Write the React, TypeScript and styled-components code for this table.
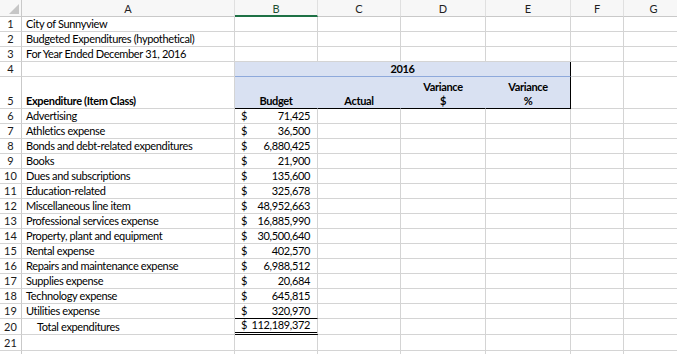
import React from "react";
import styled, { createGlobalStyle, css } from "styled-components";

const GlobalStyle = createGlobalStyle`
  html, body {
    margin: 0;
    padding: 0;
    background: #ffffff;
    overflow: hidden;
  }
  * {
    box-sizing: border-box;
  }
`;

const GRID = "#d4d4d4";
const FILL = "#d9e1f2";
const FONT = `"Lato", "Open Sans", "Liberation Sans", sans-serif`;

const Sheet = styled.div`
  display: grid;
  grid-template-columns: 22px 213px 83px 83px 85px 85px 53px 60px;
  grid-template-rows: 17px repeat(4, 15px) 32px repeat(14, 15px) 16px 16px 16px;
  font-family: ${FONT};
  font-size: 11px;
  letter-spacing: -0.35px;
  color: #000;
  width: 677px;
`;

const Corner = styled.div`
  position: relative;
  background: #f7f7f7;
  border-right: 1px solid #c9c9c9;
  border-bottom: 1px solid #c9c9c9;

  &::after {
    content: "";
    position: absolute;
    right: 2px;
    bottom: 2px;
    width: 0;
    height: 0;
    border-left: 10px solid transparent;
    border-bottom: 10px solid #c6c6c6;
  }
`;

const ColHead = styled.div<{ $selected?: boolean }>`
  display: flex;
  align-items: center;
  justify-content: center;
  background: #f7f7f7;
  border-right: 1px solid #e0e0e0;
  border-bottom: 1px solid #c9c9c9;
  font-size: 11px;
  letter-spacing: 0;
  color: #1f1f1f;
  padding-top: 1px;
  ${(p) =>
    p.$selected &&
    css`
      border-bottom: 2px solid #1e7145;
      color: #1e4f32;
    `}
`;

const RowHead = styled.div`
  display: flex;
  align-items: flex-end;
  justify-content: center;
  padding-bottom: 1px;
  background: #fff;
  border-right: 1px solid #c9c9c9;
  border-bottom: 1px solid ${GRID};
  font-size: 11px;
  letter-spacing: 0;
  color: #1a1a1a;
`;

type Edge = "grid" | "black" | "double" | "blue" | "none";

const edge = (e: Edge) => {
  switch (e) {
    case "black":
      return "1px solid #000";
    case "double":
      return "3px double #000";
    case "blue":
      return "1px solid #8ea9db";
    case "none":
      return `1px solid ${FILL}`;
    default:
      return `1px solid ${GRID}`;
  }
};

const Cell = styled.div<{
  $fill?: boolean;
  $bold?: boolean;
  $align?: "left" | "center" | "right";
  $bottom?: Edge;
  $right?: Edge;
  $span?: number;
  $indent?: number;
}>`
  display: flex;
  flex-direction: column;
  justify-content: flex-end;
  align-items: ${(p) =>
    p.$align === "center" ? "center" : p.$align === "right" ? "flex-end" : "flex-start"};
  padding: 0 4px 0 ${(p) => 4 + (p.$indent ?? 0)}px;
  white-space: nowrap;
  line-height: 14px;
  background: ${(p) => (p.$fill ? FILL : "#fff")};
  font-weight: ${(p) => (p.$bold ? 700 : 400)};
  border-right: ${(p) => edge(p.$right ?? "grid")};
  border-bottom: ${(p) => edge(p.$bottom ?? "grid")};
  grid-column: ${(p) => (p.$span ? `span ${p.$span}` : "auto")};
`;

const Money = styled.div`
  display: flex;
  justify-content: space-between;
  width: 100%;
  padding: 0 3px 0 2px;
`;

const cols = ["A", "B", "C", "D", "E", "F", "G"];

const items: [string, string][] = [
  ["Advertising", "71,425"],
  ["Athletics expense", "36,500"],
  ["Bonds and debt-related expenditures", "6,880,425"],
  ["Books", "21,900"],
  ["Dues and subscriptions", "135,600"],
  ["Education-related", "325,678"],
  ["Miscellaneous line item", "48,952,663"],
  ["Professional services expense", "16,885,990"],
  ["Property, plant and equipment", "30,500,640"],
  ["Rental expense", "402,570"],
  ["Repairs and maintenance expense", "6,988,512"],
  ["Supplies expense", "20,684"],
  ["Technology expense", "645,815"],
  ["Utilities expense", "320,970"],
];

const Blanks = ({ from }: { from: number }) => (
  <>
    {cols.slice(from).map((c) => (
      <Cell key={c} />
    ))}
  </>
);

export default function App() {
  return (
    <>
      <GlobalStyle />
      <Sheet>
        <Corner />
        {cols.map((c) => (
          <ColHead key={c} $selected={c === "B"}>
            {c}
          </ColHead>
        ))}

        <RowHead>1</RowHead>
        <Cell>City of Sunnyview</Cell>
        <Blanks from={1} />

        <RowHead>2</RowHead>
        <Cell>Budgeted Expenditures (hypothetical)</Cell>
        <Blanks from={1} />

        <RowHead>3</RowHead>
        <Cell>For Year Ended December 31, 2016</Cell>
        <Blanks from={1} />

        <RowHead>4</RowHead>
        <Cell />
        <Cell $fill $bold $span={4} $align="center" $bottom="blue" $right="black">
          2016
        </Cell>
        <Blanks from={5} />

        <RowHead>5</RowHead>
        <Cell $bold>Expenditure (Item Class)</Cell>
        <Cell $fill $bold $align="center" $bottom="black" $right="none">
          Budget
        </Cell>
        <Cell $fill $bold $align="center" $bottom="black" $right="none">
          Actual
        </Cell>
        <Cell $fill $bold $align="center" $bottom="black" $right="none">
          <span>Variance</span>
          <span>$</span>
        </Cell>
        <Cell $fill $bold $align="center" $bottom="black" $right="black">
          <span>Variance</span>
          <span>%</span>
        </Cell>
        <Blanks from={5} />

        {items.map(([label, amount], i) => (
          <React.Fragment key={label}>
            <RowHead>{i + 6}</RowHead>
            <Cell>{label}</Cell>
            <Cell $bottom={i === items.length - 1 ? "black" : "grid"}>
              <Money>
                <span>$</span>
                <span>{amount}</span>
              </Money>
            </Cell>
            <Blanks from={2} />
          </React.Fragment>
        ))}

        <RowHead>20</RowHead>
        <Cell $indent={11}>Total expenditures</Cell>
        <Cell $bottom="double">
          <Money>
            <span>$</span>
            <span>112,189,372</span>
          </Money>
        </Cell>
        <Blanks from={2} />

        <RowHead>21</RowHead>
        <Blanks from={0} />

        <RowHead />
        <Blanks from={0} />
      </Sheet>
    </>
  );
}
